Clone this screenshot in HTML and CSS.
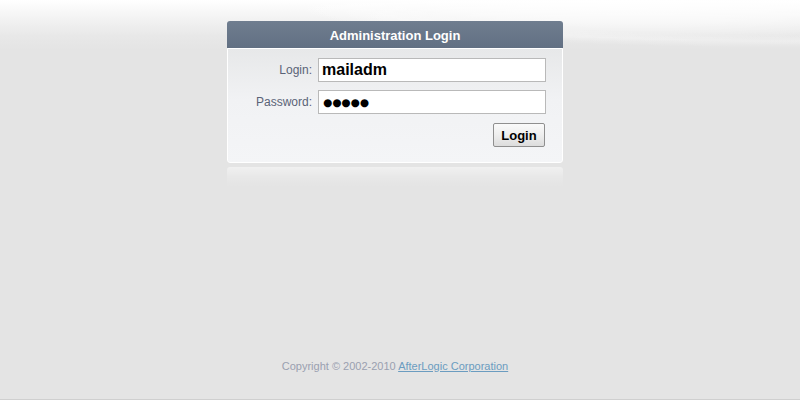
FILE: index.html
```html
<!DOCTYPE html>
<html>
<head>
<meta charset="utf-8">
<title>Administration Login</title>
<link rel="stylesheet" href="styles.css">
</head>
<body>
<div class="page">
  <div class="panel">
    <div class="panel-head">Administration Login</div>
    <form class="panel-body">
      <div class="row">
        <label class="lbl" for="login">Login:</label>
        <input class="field field-login" id="login" type="text" value="mailadm">
      </div>
      <div class="row">
        <label class="lbl" for="pass">Password:</label>
        <div class="field field-pass" id="pass">●●●●●</div>
      </div>
      <div class="actions">
        <button class="btn" type="button">Login</button>
      </div>
    </form>
  </div>
  <div class="reflection"></div>
  <div class="footer">Copyright © 2002-2010 <a href="#" class="link">AfterLogic Corporation</a></div>
</div>
</body>
</html>
```
FILE: styles.css
```css
html, body {
  margin: 0;
  padding: 0;
}
body {
  background: #e4e4e4;
  font-family: Tahoma, "Liberation Sans", Arial, sans-serif;
}
.page {
  height: 399px;
  padding-right: 10px;
  border-bottom: 1px solid #cfcfcf;
  display: flex;
  flex-direction: column;
  align-items: center;
  background:
    radial-gradient(ellipse 380px 48px at 640px -6px, rgba(255,255,255,0.9) 0%, rgba(255,255,255,0.5) 60%, rgba(255,255,255,0) 100%),
    radial-gradient(ellipse 520px 50px at 780px 0px, rgba(255,255,255,0) 70%, rgba(255,255,255,0.3) 82%, rgba(255,255,255,0) 95%),
    linear-gradient(to bottom, #ffffff 0px, #f3f3f3 18px, #e8e8e8 36px, #e4e4e4 50px, #e4e4e4 100%);
}
.panel {
  margin-top: 21px;
  width: 336px;
}
.panel-head {
  height: 27px;
  line-height: 30px;
  background: linear-gradient(to bottom, #6f7d8f, #627083);
  border-radius: 3px 3px 0 0;
  color: #ffffff;
  font-weight: bold;
  font-size: 13px;
  text-align: center;
}
.panel-body {
  margin: 0;
  box-sizing: border-box;
  height: 115px;
  border: 1px solid #ffffff;
  border-radius: 0 0 3px 3px;
  background: linear-gradient(to bottom, #e7e8e9 0%, #f1f2f4 45%, #f4f5f7 100%);
  padding: 9px 16px 0 0;
  display: flex;
  flex-direction: column;
  gap: 8px;
}
.row {
  display: flex;
  align-items: center;
  gap: 6px;
}
.lbl {
  width: 84px;
  text-align: right;
  font-size: 12px;
  color: #5a6377;
}
.field {
  box-sizing: border-box;
  width: 228px;
  height: 24px;
  border: 1px solid #b9b9b9;
  background: #ffffff;
  margin: 0;
  padding: 0 3px;
  font-family: "Liberation Sans", Arial, sans-serif;
  font-weight: bold;
  font-size: 16px;
  color: #000000;
  outline: none;
}
.field-pass {
  display: flex;
  align-items: center;
  padding: 0 4px;
  font-size: 10.5px;
  font-family: "DejaVu Sans", sans-serif;
}
.actions {
  display: flex;
  justify-content: flex-end;
  margin-top: 1px;
  padding-right: 1px;
}
.btn {
  box-sizing: border-box;
  width: 52px;
  height: 24px;
  border: 1px solid #8f8f8f;
  border-radius: 2px;
  background: linear-gradient(to bottom, #fafafa 0%, #eeeeee 50%, #dcdcdc 100%);
  font-family: "Liberation Sans", Arial, sans-serif;
  font-weight: bold;
  font-size: 13px;
  color: #000;
  padding: 0;
}
.reflection {
  margin-top: 4px;
  width: 336px;
  height: 20px;
  border-radius: 3px 3px 0 0;
  background: linear-gradient(to bottom, rgba(255,255,255,0.45) 0%, rgba(255,255,255,0.15) 50%, rgba(255,255,255,0) 100%);
}
.footer {
  margin-top: auto;
  margin-bottom: 26px;
  font-size: 11px;
  line-height: 14px;
  color: #9aa0b0;
}
.link {
  color: #6b9cc0;
  text-decoration: underline;
}
```
